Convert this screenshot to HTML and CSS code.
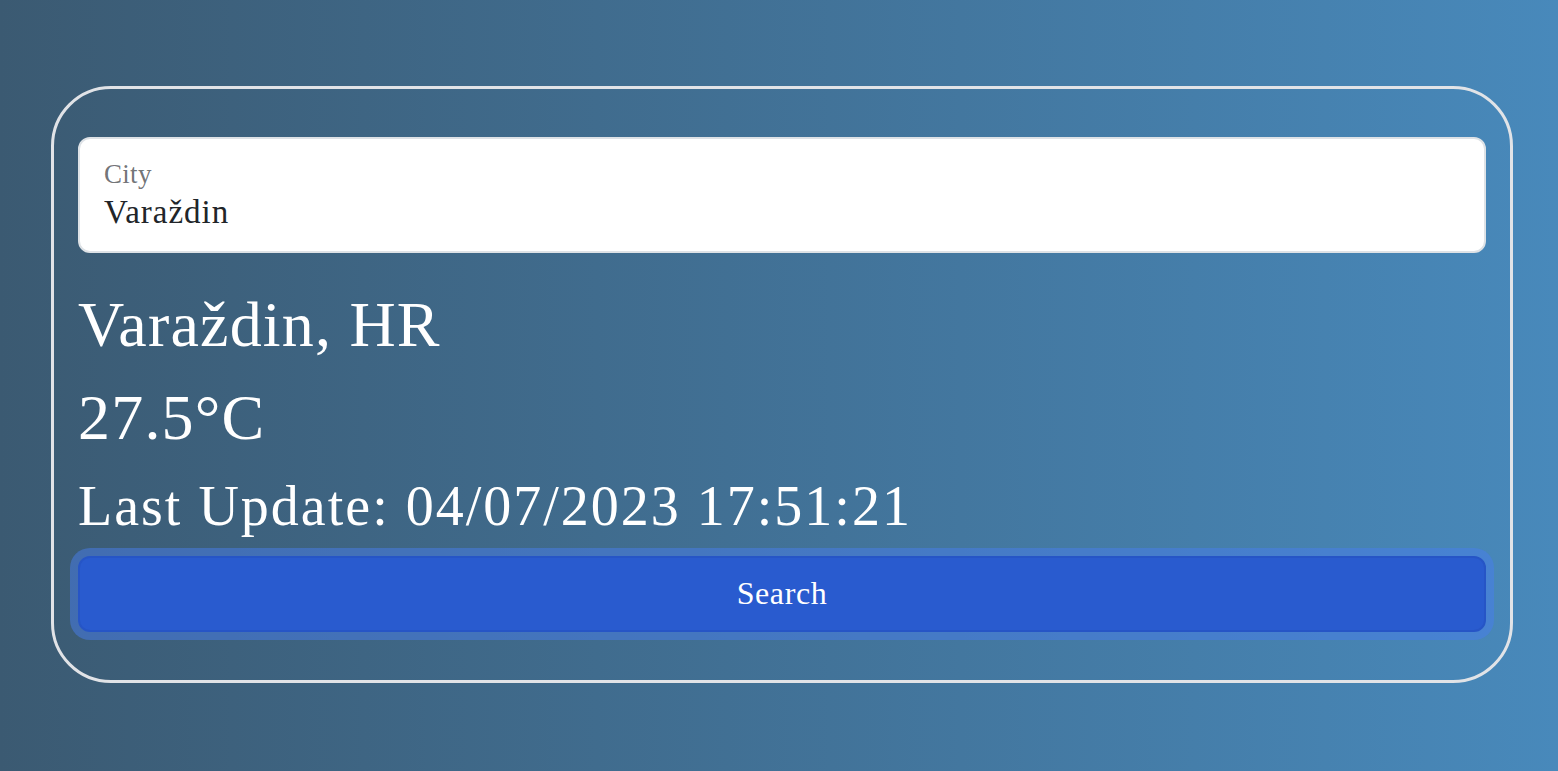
FILE: index.html
```html
<!DOCTYPE html>
<html lang="en">
<head>
<meta charset="utf-8">
<title>Weather</title>
<link rel="stylesheet" href="styles.css">
</head>
<body>
<main class="page">
  <section class="card">
    <div class="field">
      <label class="field-label" for="city">City</label>
      <input class="field-input" id="city" type="text" value="Varaždin">
    </div>
    <h2 class="title">Varaždin, HR</h2>
    <h2 class="title">27.5°C</h2>
    <h3 class="updated">Last Update: 04/07/2023 17:51:21</h3>
    <button class="btn" type="button">Search</button>
  </section>
</main>
</body>
</html>
```
FILE: styles.css
```css
* { box-sizing: border-box; }
html, body { margin: 0; height: 100%; }
body {
  background: linear-gradient(to right, #3b5a72, #4889bb);
  font-family: "Liberation Serif", "Times New Roman", serif;
  color: #fff;
}
.page {
  padding: 86px 45px 0 51px;
}
.card {
  border: 3px solid #e1e3e7;
  border-radius: 60px;
  padding: 48px 24px 48px 24px;
  display: flex;
  flex-direction: column;
}
.field {
  height: 116px;
  background: #fff;
  border: 2px solid #dee2e6;
  border-radius: 12px;
  padding: 19px 24px 0 24px;
  display: flex;
  flex-direction: column;
  margin-bottom: 34px;
}
.field-label {
  font-size: 27px;
  line-height: 32px;
  color: rgba(33, 37, 41, 0.65);
  margin-bottom: 2px;
  letter-spacing: 0.3px;
}
.field-input {
  border: 0;
  outline: 0;
  padding: 0;
  font-family: inherit;
  font-size: 33px;
  line-height: 40px;
  height: 40px;
  color: #212529;
  background: transparent;
  letter-spacing: 1px;
}
.title {
  margin: 0 0 16px;
  font-weight: 400;
  font-size: 64px;
  line-height: 1.2;
  letter-spacing: 1.2px;
}
.updated {
  margin: 0 0 16px;
  font-weight: 400;
  font-size: 56px;
  line-height: 1.2;
  letter-spacing: 2px;
}
.btn {
  height: 76px;
  border: 2px solid #2655c6;
  background: #295bcf;
  color: #fff;
  border-radius: 12px;
  font-family: inherit;
  font-size: 32px;
  letter-spacing: 0.6px;
  box-shadow: 0 0 0 8px rgba(71, 125, 237, 0.5);
  cursor: pointer;
}
```
